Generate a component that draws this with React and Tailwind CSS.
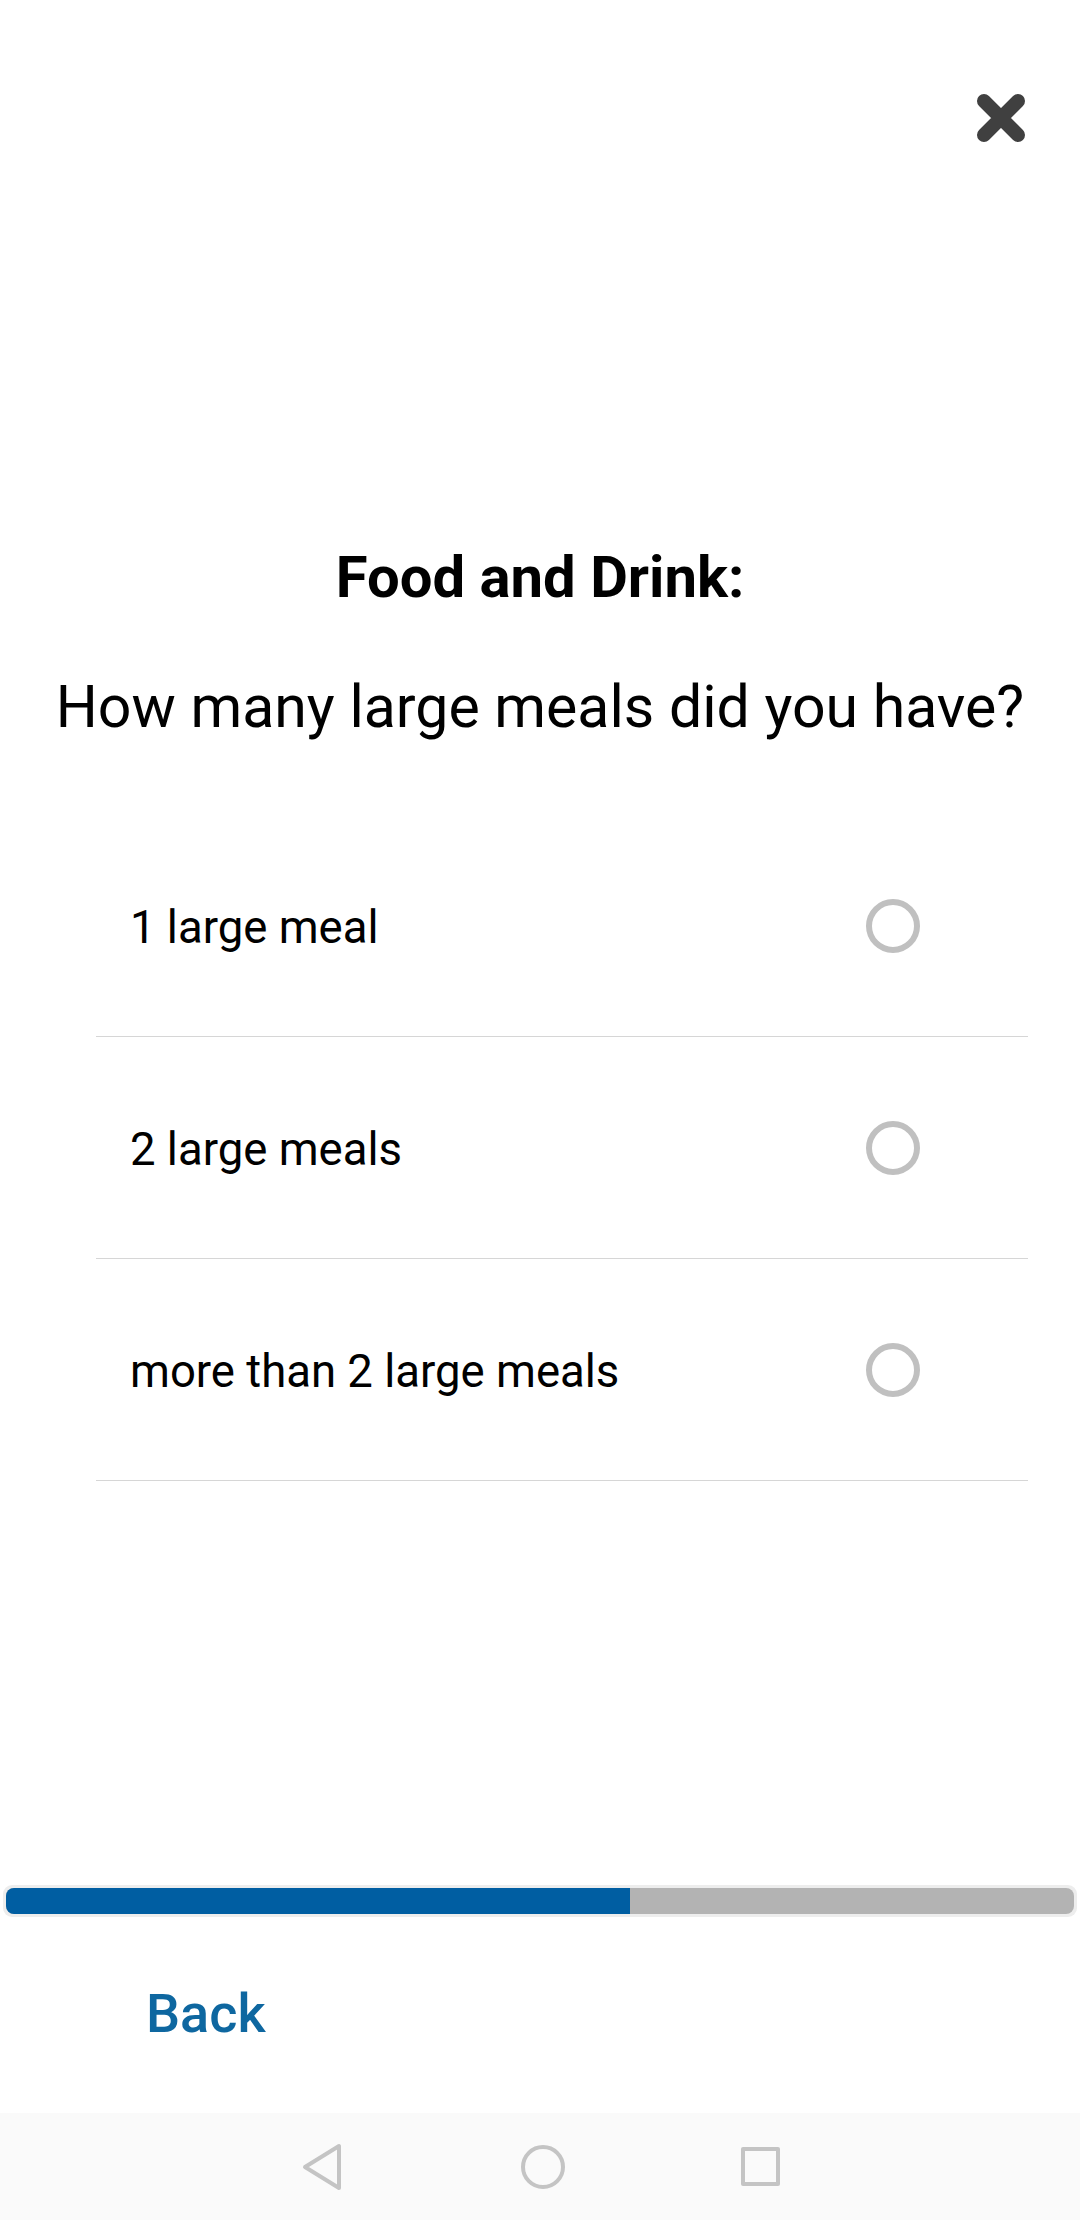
import React from "react";

const options = ["1 large meal", "2 large meals", "more than 2 large meals"];

const CloseIcon = () => (
  <svg width="50" height="50" viewBox="0 0 50 50">
    <path d="M8 8 L42 42 M42 8 L8 42" stroke="#404040" strokeWidth="14" strokeLinecap="round" />
  </svg>
);

const OptionRow = ({ label }) => (
  <div className="flex h-[222px] items-center justify-between border-b-[1.5px] border-[#d6d6d6] pl-[34px] pr-[108px]">
    <span className="pt-[5px] text-[45.5px] leading-[54px] text-black">{label}</span>
    <div className="h-[54px] w-[54px] rounded-full border-[6px] border-[#c0c0c0]" />
  </div>
);

export default function App() {
  return (
    <div
      className="flex h-[2220px] w-[1080px] flex-col bg-white"
      style={{ fontFamily: "Roboto, 'Noto Sans', sans-serif" }}
    >
      {/* close */}
      <div className="flex justify-end pr-[54px] pt-[93px]">
        <CloseIcon />
      </div>

      {/* question */}
      <h1 className="mt-[400px] text-center text-[58px] font-bold leading-[68px] text-black">
        Food and Drink:
      </h1>
      <p className="mt-[62px] text-center text-[59px] leading-[68px] text-black">
        How many large meals did you have?
      </p>

      {/* answers */}
      <div className="ml-[96px] mt-[74px] w-[932px]">
        {options.map((o) => (
          <OptionRow key={o} label={o} />
        ))}
      </div>

      <div className="flex-1" />

      {/* progress */}
      <div className="mx-[3px] rounded-[9px] bg-[#ededed] p-[3px]">
        <div className="flex h-[26px] overflow-hidden rounded-[8px] bg-[#b3b3b3]">
          <div className="h-full w-[624px] bg-[#005ea2]" />
        </div>
      </div>

      <div className="mt-[67px] h-[60px] pl-[146px] text-[54px] font-medium leading-[60px] text-[#0e67a0]">
        Back
      </div>

      {/* android nav */}
      <div className="mt-[69px] flex h-[107px] items-center justify-center gap-[176px] bg-[#fafafa]">
        <svg width="44" height="48" viewBox="0 0 44 48">
          <path d="M38 3 L38 45 L4 24 Z" fill="none" stroke="#c4c4c4" strokeWidth="4" strokeLinejoin="round" />
        </svg>
        <div className="h-[44px] w-[44px] rounded-full border-[4px] border-[#c4c4c4]" />
        <div className="h-[39px] w-[39px] rounded-[2px] border-[4px] border-[#c4c4c4]" />
      </div>
    </div>
  );
}
